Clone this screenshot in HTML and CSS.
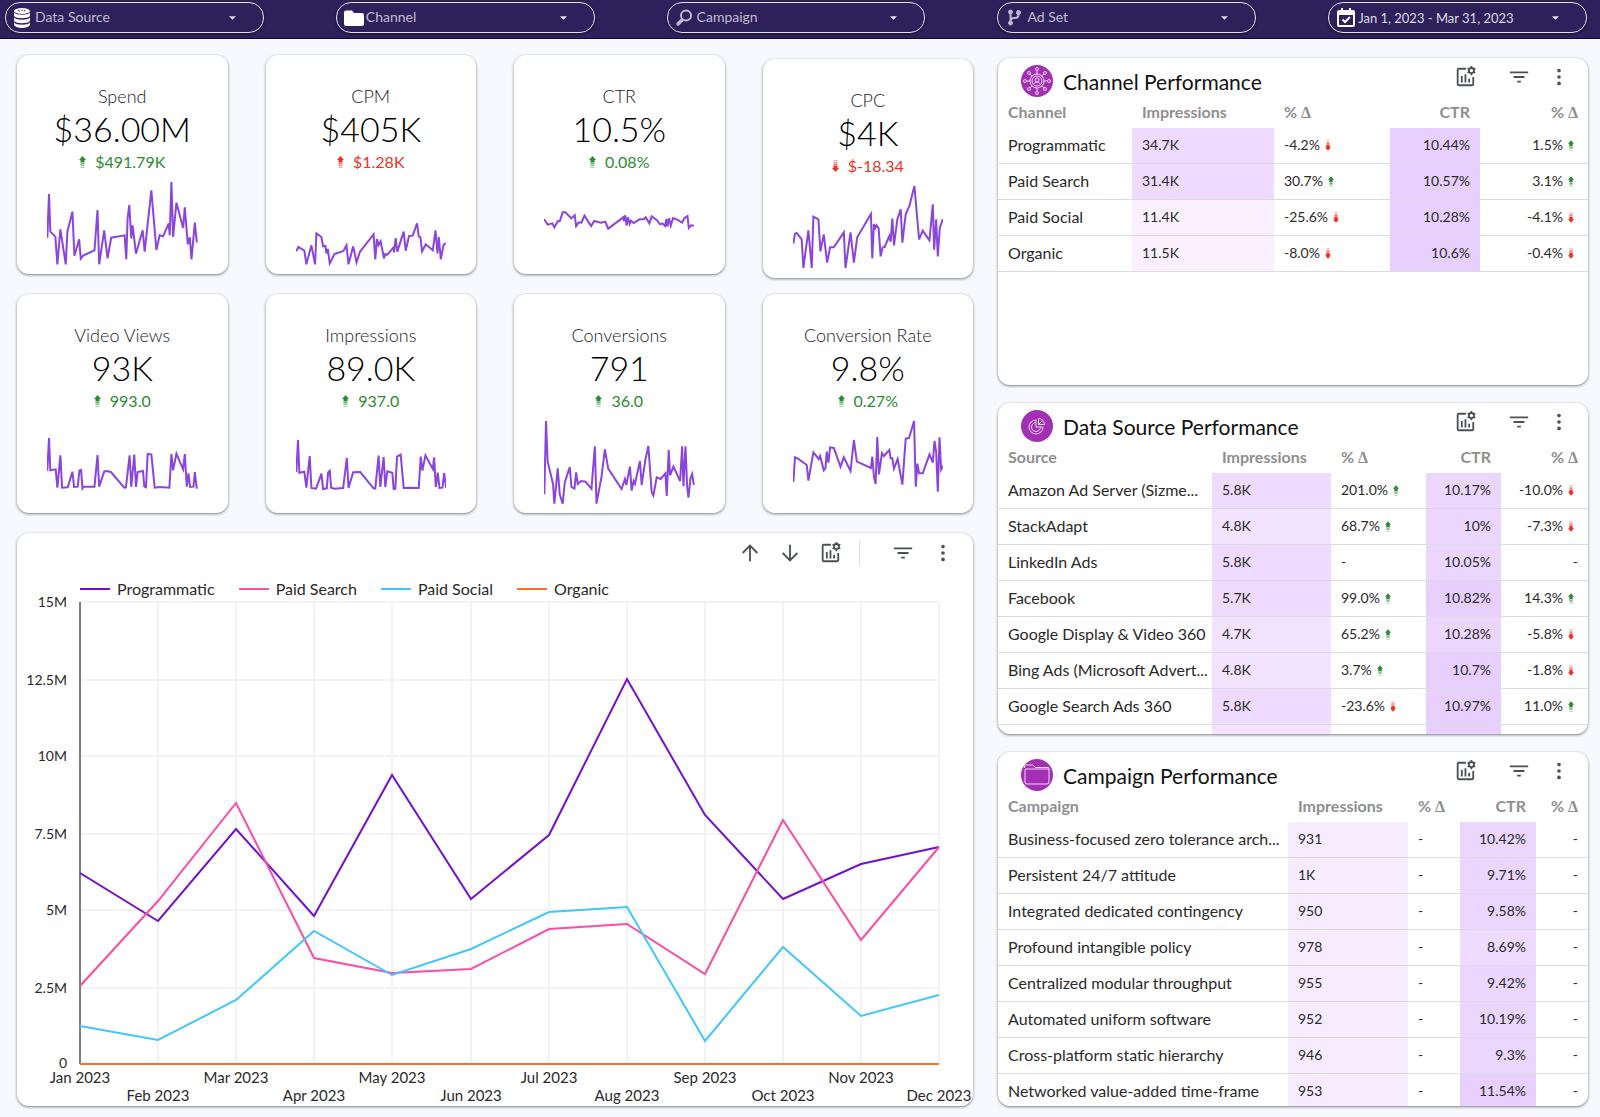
FILE: index.html
```html
<!DOCTYPE html>
<html lang="en">
<head>
    <meta charset="UTF-8">
    <meta name="viewport" content="width=device-width, initial-scale=1.0">
    <title>Marketing Dashboard</title>
    <link rel="stylesheet" href="styles.css">
</head>
<body>

    <!-- shared icons -->
    <svg class="sprite" aria-hidden="true">
        <symbol id="arrow-up" viewBox="0 0 7 12">
            <path d="M3.5 0L7 4H5.5V6.5H1.500V4H0z"/>
            <path d="M1.500 7.200h4v1.300h-4z" opacity=".8"/>
            <path d="M1.500 9.200h4v1h-4z" opacity=".6"/>
            <path d="M1.500 11h4v1h-4z" opacity=".4"/>
        </symbol>
        <symbol id="arrow-down" viewBox="0 0 7 12">
            <path d="M3.5 12L7 8H5.5V5.5H1.500V8H0z"/>
            <path d="M1.500 3.500h4v1.300h-4z" opacity=".8"/>
            <path d="M1.500 1.800h4v1h-4z" opacity=".6"/>
            <path d="M1.500 0h4v1h-4z" opacity=".4"/>
        </symbol>
        <symbol id="caret" viewBox="0 0 8 4"><path d="M0 0h8L4 4z"/></symbol>
        <symbol id="chart-settings" viewBox="0 0 24 24">
            <g fill="none" stroke="currentColor" stroke-width="2">
                <path d="M13 3H5a1 1 0 0 0-1 1v16a1 1 0 0 0 1 1h15a1 1 0 0 0 1-1v-8"/>
                <path d="M8.500 18v-7M12.500 18V9M16.500 18v-4"/>
                <circle cx="19" cy="5" r="2.800"/>
            </g>
            <path d="M18.200 0h1.600l.4 2h-2.400zM18.200 10h1.600l.4-2h-2.400zM14.300 3.200l.9-1.400 1.800 1-.9 1.600zM14.300 6.800l.9 1.400 1.800-1-.9-1.600zM23.700 3.200l-.9-1.400-1.800 1 .9 1.600zM23.700 6.800l-.9 1.400-1.800-1 .9-1.600z"/>
        </symbol>
        <symbol id="filter" viewBox="0 0 24 24"><path d="M2 6h20v2H2zM6 11h12v2H6zM10 16h4v2h-4z"/></symbol>
        <symbol id="more" viewBox="0 0 24 24"><circle cx="12" cy="5" r="2"/><circle cx="12" cy="12" r="2"/><circle cx="12" cy="19" r="2"/></symbol>
        <symbol id="sort-up" viewBox="0 0 24 24"><path d="M12 21V4M4 12l8-8 8 8" fill="none" stroke="currentColor" stroke-width="2"/></symbol>
        <symbol id="sort-down" viewBox="0 0 24 24"><path d="M12 3v17M4 12l8 8 8-8" fill="none" stroke="currentColor" stroke-width="2"/></symbol>
    </svg>

    <header class="topbar">
        <div class="filter">
            <svg class="filter-icon" viewBox="0 0 20 20" aria-hidden="true">
                <ellipse cx="9" cy="3" rx="8" ry="3"/>
                <path d="M1 4.500c2 3 14 3 16 0V8c-2 3-14 3-16 0zM1 9.500c2 3 14 3 16 0V13c-2 3-14 3-16 0zM1 14.500c2 3 14 3 16 0V17c-2 4-14 4-16 0z"/>
                <path d="M5 2l2 1.500M9 1.500v1.500M12 2l-1 1.500" stroke="#2c215a" fill="none"/>
            </svg>
            <select aria-label="Data Source"><option>Data Source</option></select>
            <svg class="caret" aria-hidden="true"><use href="#caret"/></svg>
        </div>
        <div class="filter">
            <svg class="filter-icon" viewBox="0 0 20 20" aria-hidden="true"><path d="M2 2.500h6l2 2.500h8q2 0 2 2v9q0 2-2 2H2q-2 0-2-2V4.500q0-2 2-2z"/></svg>
            <select aria-label="Channel"><option>Channel</option></select>
            <svg class="caret" aria-hidden="true"><use href="#caret"/></svg>
        </div>
        <div class="filter">
            <svg class="filter-icon soft" viewBox="0 0 20 20" aria-hidden="true">
                <circle cx="11" cy="7.500" r="5" fill="none" stroke-width="2"/>
                <path d="M7 12l-4 4" stroke-width="3.500" stroke-linecap="round"/>
            </svg>
            <select aria-label="Campaign"><option>Campaign</option></select>
            <svg class="caret" aria-hidden="true"><use href="#caret"/></svg>
        </div>
        <div class="filter">
            <svg class="filter-icon soft" viewBox="0 0 20 20" aria-hidden="true">
                <path d="M5.500 5v10M13.500 5v2q0 3-4 3t-4 3" fill="none" stroke-width="2"/>
                <circle cx="5.500" cy="4" r="2"/><circle cx="13.500" cy="4.500" r="2"/><circle cx="5.500" cy="15" r="2"/>
            </svg>
            <select aria-label="Ad Set"><option>Ad Set</option></select>
            <svg class="caret" aria-hidden="true"><use href="#caret"/></svg>
        </div>
        <button type="button" class="filter date" aria-haspopup="dialog">
            <svg class="filter-icon" viewBox="0 0 20 20" aria-hidden="true">
                <path d="M3 2h2V0h2v2h6V0h2v2h2q2 0 2 2v13q0 2-2 2H3q-2 0-2-2V4q0-2 2-2zM3 7v10h14V7z" fill-rule="evenodd"/>
                <path d="M6.500 11.500l2.500 2.500 5-5" fill="none" stroke="#fff" stroke-width="2"/>
            </svg>
            <span class="date-text">Jan 1, 2023 - Mar 31, 2023</span>
            <svg class="caret" aria-hidden="true"><use href="#caret"/></svg>
        </button>
    </header>

    <main class="dashboard">
        <div class="left">
            <section class="kpis">
                <article class="card kpi">
                    <h2>Spend</h2>
                    <p class="value">$36.00M</p>
                    <p class="delta good"><svg class="arrow"><use href="#arrow-up"/></svg>$491.79K</p>
                    <svg class="spark" viewBox="142 408 450 255" preserveAspectRatio="none"><polyline points="143,578 148,447 152,560 167,575 173,658 182,553 198,658 203,560 218,500 224,632 238,583 243,641 250,632 284,616 293,495 298,658 313,556 323,640 334,578 374,571 379,643 383,520 388,480 394,580 398,541 408,626 428,556 434,620 454,436 469,615 479,570 489,574 506,535 509,571 514,411 519,576 529,473 549,549 554,487 563,598 569,577 574,643 584,533 590,592"/></svg>
                </article>
                <article class="card kpi">
                    <h2>CPM</h2>
                    <p class="value">$405K</p>
                    <p class="delta bad"><svg class="arrow"><use href="#arrow-up"/></svg>$1.28K</p>
                    <svg class="spark" viewBox="897 408 450 255" preserveAspectRatio="none"><polyline points="898,619 904,606 922,617 928,658 943,601 954,658 958,565 973,576 978,604 985,603 988,625 992,612 998,655 1012,627 1039,618 1048,601 1054,658 1068,604 1078,652 1088,621 1129,568 1134,643 1139,582 1144,600 1150,589 1160,640 1164,627 1170,629 1189,607 1190,622 1195,579 1200,620 1219,560 1225,617 1235,573 1246,572 1259,535 1264,574 1269,577 1274,619 1285,598 1306,616 1314,556 1320,625 1324,576 1330,643 1338,600 1345,594"/></svg>
                </article>
                <article class="card kpi">
                    <h2>CTR</h2>
                    <p class="value">10.5%</p>
                    <p class="delta good"><svg class="arrow"><use href="#arrow-up"/></svg>0.08%</p>
                    <svg class="spark" viewBox="166 408 450 255" preserveAspectRatio="none"><polyline points="166,522 177,539 191,535 197,547 207,529 213,529 222,502 230,502 248,520 258,511 262,543 270,532 278,533 287,512 307,543 316,528 336,533 349,530 358,551 403,517 405,528 409,511 413,542 417,517 422,537 426,527 434,534 452,523 465,523 470,517 481,535 488,514 503,525 513,538 520,535 528,543 532,522 535,545 540,520 545,542 552,519 563,523 579,533 585,520 595,513 599,549 606,541 614,542"/></svg>
                </article>
                <article class="card kpi low">
                    <h2>CPC</h2>
                    <p class="value">$4K</p>
                    <p class="delta bad"><svg class="arrow"><use href="#arrow-down"/></svg>$-18.34</p>
                    <svg class="spark" viewBox="910 420 450 255" preserveAspectRatio="none"><polyline points="911,596 916,566 921,564 936,583 941,669 956,556 966,669 971,515 986,523 992,619 1002,568 1012,653 1021,607 1032,607 1062,562 1067,669 1082,562 1092,653 1102,577 1143,507 1147,640 1152,537 1156,549 1160,541 1166,550 1172,634 1178,607 1184,606 1198,573 1202,590 1207,521 1212,601 1222,523 1232,493 1237,593 1247,508 1258,483 1273,423 1287,583 1298,557 1318,586 1328,478 1332,614 1338,523 1343,634 1349,548 1358,522"/></svg>
                </article>
                <article class="card kpi">
                    <h2>Video Views</h2>
                    <p class="value">93K</p>
                    <p class="delta good"><svg class="arrow"><use href="#arrow-up"/></svg>993.0</p>
                    <svg class="spark" viewBox="142 405 450 255" preserveAspectRatio="none"><polyline points="143,557 148,459 152,556 168,553 173,608 182,511 187,608 204,607 218,560 223,606 234,605 239,556 244,555 248,610 251,605 284,605 293,510 298,605 313,560 320,558 333,561 373,608 378,607 389,511 394,605 403,509 408,606 413,561 429,558 433,605 438,607 443,507 454,508 464,608 480,606 508,608 514,507 519,556 529,506 549,553 554,507 560,605 565,565 570,606 580,605 584,561 590,611"/></svg>
                </article>
                <article class="card kpi">
                    <h2>Impressions</h2>
                    <p class="value">89.0K</p>
                    <p class="delta good"><svg class="arrow"><use href="#arrow-up"/></svg>937.0</p>
                    <svg class="spark" viewBox="897 405 450 255" preserveAspectRatio="none"><polyline points="898,561 903,465 907,563 922,560 928,608 938,513 943,609 957,611 973,566 978,612 989,610 993,562 998,557 1002,608 1012,611 1038,609 1049,519 1054,609 1068,562 1089,561 1129,610 1134,611 1144,512 1149,606 1159,516 1164,606 1170,559 1185,563 1189,612 1194,611 1199,515 1210,509 1219,609 1240,608 1264,609 1270,515 1275,557 1284,511 1306,552 1310,517 1315,606 1321,563 1326,609 1335,608 1340,564 1346,609"/></svg>
                </article>
                <article class="card kpi">
                    <h2>Conversions</h2>
                    <p class="value">791</p>
                    <p class="delta good"><svg class="arrow"><use href="#arrow-up"/></svg>36.0</p>
                    <svg class="spark" viewBox="166 405 450 255" preserveAspectRatio="none"><polyline points="167,628 172,408 177,530 193,597 197,656 207,550 213,628 222,656 228,593 243,546 248,606 257,611 262,562 267,597 277,588 290,590 308,611 318,484 323,656 338,575 348,493 358,551 398,612 408,582 412,600 423,545 428,617 434,588 438,596 453,528 458,600 469,525 478,483 488,622 493,632 503,577 515,582 529,565 533,633 539,495 543,571 553,545 573,588 579,484 583,604 589,484 594,605 598,638 604,580 609,567 614,600"/></svg>
                </article>
                <article class="card kpi">
                    <h2>Conversion Rate</h2>
                    <p class="value">9.8%</p>
                    <p class="delta good"><svg class="arrow"><use href="#arrow-up"/></svg>0.27%</p>
                    <svg class="spark" viewBox="910 405 450 255" preserveAspectRatio="none"><polyline points="911,591 916,517 925,521 951,540 956,587 971,502 987,522 991,513 1002,556 1007,550 1011,500 1016,533 1021,487 1032,489 1052,545 1062,517 1082,558 1092,465 1101,530 1143,549 1147,515 1152,575 1157,597 1162,456 1167,568 1176,504 1182,513 1198,495 1202,520 1207,520 1212,551 1223,522 1237,599 1247,461 1257,459 1272,408 1277,605 1282,536 1287,565 1298,565 1318,508 1328,533 1333,468 1338,500 1343,620 1348,457 1353,553 1358,543"/></svg>
                </article>
            </section>

            <section class="card trend">
                <div class="tools trend-tools">
                    <button type="button" aria-label="Sort ascending"><svg><use href="#sort-up"/></svg></button>
                    <button type="button" aria-label="Sort descending"><svg><use href="#sort-down"/></svg></button>
                    <button type="button" aria-label="Chart settings"><svg><use href="#chart-settings"/></svg></button>
                    <span class="divider"></span>
                    <button type="button" aria-label="Filter"><svg><use href="#filter"/></svg></button>
                    <button type="button" aria-label="More options"><svg><use href="#more"/></svg></button>
                </div>
                <ul class="legend">
                    <li class="programmatic">Programmatic</li>
                    <li class="search">Paid Search</li>
                    <li class="social">Paid Social</li>
                    <li class="organic">Organic</li>
                </ul>
                <svg class="plot" viewBox="0 0 956 508">
                    <path class="grid" d="M63 4H922M63 82H922M63 158H922M63 236H922M63 312H922M63 390H922M141 4V466M219 4V466M297 4V466M375 4V466M454 4V466M532 4V466M610 4V466M688 4V466M766 4V466M844 4V466M922 4V466"/>
                    <path class="axis" d="M63 4V466H922"/>
                    <polyline class="line programmatic" points="63,275 141,323 219,231 297,318 375,177 454,301 532,237 610,81 688,217 766,301 844,266 922,249"/>
                    <polyline class="line search" points="63,388 141,303 219,205 297,360 375,375 454,371 532,331 610,326 688,376 766,222 844,342 922,249"/>
                    <polyline class="line social" points="63,428 141,442 219,402 297,333 375,377 454,351 532,314 610,309 688,443 766,349 844,418 922,397"/>
                    <polyline class="line organic" points="63,466 922,466"/>
                    <g class="ylabels">
                        <text x="50" y="9">15M</text>
                        <text x="50" y="87">12.5M</text>
                        <text x="50" y="163">10M</text>
                        <text x="50" y="241">7.5M</text>
                        <text x="50" y="317">5M</text>
                        <text x="50" y="395">2.5M</text>
                        <text x="50" y="470">0</text>
                    </g>
                    <g class="xlabels">
                        <text x="63" y="485">Jan 2023</text>
                        <text x="141" y="503">Feb 2023</text>
                        <text x="219" y="485">Mar 2023</text>
                        <text x="297" y="503">Apr 2023</text>
                        <text x="375" y="485">May 2023</text>
                        <text x="454" y="503">Jun 2023</text>
                        <text x="532" y="485">Jul 2023</text>
                        <text x="610" y="503">Aug 2023</text>
                        <text x="688" y="485">Sep 2023</text>
                        <text x="766" y="503">Oct 2023</text>
                        <text x="844" y="485">Nov 2023</text>
                        <text x="922" y="503">Dec 2023</text>
                    </g>
                </svg>
            </section>
        </div>

        <div class="right">
            <section class="card panel channel">
                <div class="panel-head">
                    <svg class="badge" viewBox="0 0 32 32" aria-hidden="true">
                        <circle class="disc" cx="16" cy="16" r="16"/>
                        <circle cx="16" cy="16" r="7"/><circle cx="16" cy="16" r="5"/>
                        <circle cx="16" cy="15" r="2"/><path d="M12.500 19q3.500-4 7 0"/>
                        <path d="M16 9V6M16 23v3M9 16H6M23 16h3M11 11L9 9M21 11l2-2M11 21l-2 2M21 21l2 2"/>
                        <circle cx="16" cy="4" r="1.500"/><circle cx="16" cy="28" r="1.500"/><circle cx="4" cy="16" r="1.500"/><circle cx="28" cy="16" r="1.500"/>
                        <circle cx="8" cy="8" r="1.500"/><circle cx="24" cy="8" r="1.500"/><circle cx="8" cy="24" r="1.500"/><circle cx="24" cy="24" r="1.500"/>
                    </svg>
                    <h2>Channel Performance</h2>
                    <div class="tools">
                        <button type="button" aria-label="Chart settings"><svg><use href="#chart-settings"/></svg></button>
                        <button type="button" aria-label="Filter"><svg><use href="#filter"/></svg></button>
                        <button type="button" aria-label="More options"><svg><use href="#more"/></svg></button>
                    </div>
                </div>
                <table>
                    <colgroup><col class="c-name"><col class="c-imp"><col class="c-d1"><col class="c-ctr"><col class="c-d2"></colgroup>
                    <thead>
                        <tr><th>Channel</th><th>Impressions</th><th>% <span class="tri">Δ</span></th><th>CTR</th><th>% <span class="tri">Δ</span></th></tr>
                    </thead>
                    <tbody>
                        <tr><td>Programmatic</td><td class="h3">34.7K</td><td>-4.2%<svg class="arrow bad"><use href="#arrow-down"/></svg></td><td class="h5">10.44%</td><td>1.5%<svg class="arrow good"><use href="#arrow-up"/></svg></td></tr>
                        <tr><td>Paid Search</td><td class="h3">31.4K</td><td>30.7%<svg class="arrow good"><use href="#arrow-up"/></svg></td><td class="h5">10.57%</td><td>3.1%<svg class="arrow good"><use href="#arrow-up"/></svg></td></tr>
                        <tr><td>Paid Social</td><td class="h0">11.4K</td><td>-25.6%<svg class="arrow bad"><use href="#arrow-down"/></svg></td><td class="h5">10.28%</td><td>-4.1%<svg class="arrow bad"><use href="#arrow-down"/></svg></td></tr>
                        <tr><td>Organic</td><td class="h0">11.5K</td><td>-8.0%<svg class="arrow bad"><use href="#arrow-down"/></svg></td><td class="h5">10.6%</td><td>-0.4%<svg class="arrow bad"><use href="#arrow-down"/></svg></td></tr>
                    </tbody>
                </table>
            </section>

            <section class="card panel source">
                <div class="panel-head">
                    <svg class="badge" viewBox="0 0 32 32" aria-hidden="true">
                        <circle class="disc" cx="16" cy="16" r="16"/>
                        <path d="M15 10a7 7 0 1 0 7 7h-7z"/><path d="M17.500 8.500v6h6a6 6 0 0 0-6-6z"/><path d="M15 12.500a4.500 4.500 0 1 0 4.500 4.500M18 14l3-3"/>
                    </svg>
                    <h2>Data Source Performance</h2>
                    <div class="tools">
                        <button type="button" aria-label="Chart settings"><svg><use href="#chart-settings"/></svg></button>
                        <button type="button" aria-label="Filter"><svg><use href="#filter"/></svg></button>
                        <button type="button" aria-label="More options"><svg><use href="#more"/></svg></button>
                    </div>
                </div>
                <table>
                    <colgroup><col class="c-name"><col class="c-imp"><col class="c-d1"><col class="c-ctr"><col class="c-d2"></colgroup>
                    <thead>
                        <tr><th>Source</th><th>Impressions</th><th>% <span class="tri">Δ</span></th><th>CTR</th><th>% <span class="tri">Δ</span></th></tr>
                    </thead>
                    <tbody>
                        <tr><td>Amazon Ad Server (Sizme...</td><td class="h3">5.8K</td><td>201.0%<svg class="arrow good"><use href="#arrow-up"/></svg></td><td class="h4">10.17%</td><td>-10.0%<svg class="arrow bad"><use href="#arrow-down"/></svg></td></tr>
                        <tr><td>StackAdapt</td><td class="h2">4.8K</td><td>68.7%<svg class="arrow good"><use href="#arrow-up"/></svg></td><td class="h4">10%</td><td>-7.3%<svg class="arrow bad"><use href="#arrow-down"/></svg></td></tr>
                        <tr><td>LinkedIn Ads</td><td class="h3">5.8K</td><td>-</td><td class="h4">10.05%</td><td>-</td></tr>
                        <tr><td>Facebook</td><td class="h3">5.7K</td><td>99.0%<svg class="arrow good"><use href="#arrow-up"/></svg></td><td class="h5">10.82%</td><td>14.3%<svg class="arrow good"><use href="#arrow-up"/></svg></td></tr>
                        <tr><td>Google Display &amp; Video 360</td><td class="h2">4.7K</td><td>65.2%<svg class="arrow good"><use href="#arrow-up"/></svg></td><td class="h4">10.28%</td><td>-5.8%<svg class="arrow bad"><use href="#arrow-down"/></svg></td></tr>
                        <tr><td>Bing Ads (Microsoft Advert...</td><td class="h2">4.8K</td><td>3.7%<svg class="arrow good"><use href="#arrow-up"/></svg></td><td class="h5">10.7%</td><td>-1.8%<svg class="arrow bad"><use href="#arrow-down"/></svg></td></tr>
                        <tr><td>Google Search Ads 360</td><td class="h3">5.8K</td><td>-23.6%<svg class="arrow bad"><use href="#arrow-down"/></svg></td><td class="h5">10.97%</td><td>11.0%<svg class="arrow good"><use href="#arrow-up"/></svg></td></tr>
                        <tr><td></td><td class="h2"></td><td></td><td class="h5"></td><td></td></tr>
                    </tbody>
                </table>
            </section>

            <section class="card panel campaign">
                <div class="panel-head">
                    <svg class="badge" viewBox="0 0 32 32" aria-hidden="true">
                        <circle class="disc" cx="16" cy="16" r="16"/>
                        <path d="M3.500 9V7q0-1 1-1h7l3 2.500h12.500q1 0 1 1V23q0 2-2 2H6q-2 0-2-2V11q0-1 1-1h22q1 0 1 1"/>
                    </svg>
                    <h2>Campaign Performance</h2>
                    <div class="tools">
                        <button type="button" aria-label="Chart settings"><svg><use href="#chart-settings"/></svg></button>
                        <button type="button" aria-label="Filter"><svg><use href="#filter"/></svg></button>
                        <button type="button" aria-label="More options"><svg><use href="#more"/></svg></button>
                    </div>
                </div>
                <table>
                    <colgroup><col class="c-name"><col class="c-imp"><col class="c-d1"><col class="c-ctr"><col class="c-d2"></colgroup>
                    <thead>
                        <tr><th>Campaign</th><th>Impressions</th><th>% <span class="tri">Δ</span></th><th>CTR</th><th>% <span class="tri">Δ</span></th></tr>
                    </thead>
                    <tbody>
                        <tr><td>Business-focused zero tolerance arch...</td><td class="h1">931</td><td>-</td><td class="h4">10.42%</td><td>-</td></tr>
                        <tr><td>Persistent 24/7 attitude</td><td class="h1">1K</td><td>-</td><td class="h4">9.71%</td><td>-</td></tr>
                        <tr><td>Integrated dedicated contingency</td><td class="h1">950</td><td>-</td><td class="h4">9.58%</td><td>-</td></tr>
                        <tr><td>Profound intangible policy</td><td class="h1">978</td><td>-</td><td class="h3">8.69%</td><td>-</td></tr>
                        <tr><td>Centralized modular throughput</td><td class="h1">955</td><td>-</td><td class="h4">9.42%</td><td>-</td></tr>
                        <tr><td>Automated uniform software</td><td class="h1">952</td><td>-</td><td class="h4">10.19%</td><td>-</td></tr>
                        <tr><td>Cross-platform static hierarchy</td><td class="h1">946</td><td>-</td><td class="h4">9.3%</td><td>-</td></tr>
                        <tr><td>Networked value-added time-frame</td><td class="h1">953</td><td>-</td><td class="h5">11.54%</td><td>-</td></tr>
                    </tbody>
                </table>
            </section>
        </div>
    </main>

</body>
</html>
```

FILE: styles.css
```css
* {
    box-sizing: border-box;
}

body {
    margin: 0;
    min-height: 100vh;
    background-color: #f8f9ff;
    font-family: 'Lato', sans-serif;
    font-size: 15px;
    color: #2a2a2a;
}

h2,
p,
ul {
    margin: 0;
    padding: 0;
    font-weight: 400;
}

.sprite {
    display: none;
}

svg {
    fill: currentColor;
}

.good {
    color: #2a8c30;
}

.bad {
    color: #ee3124;
}

/* top filters */
.topbar {
    display: grid;
    grid-template-columns: repeat(5, minmax(0, 1fr));
    gap: 72px;
    padding: 2px 13px 5px 5px;
    background-color: #2c215a;
    border-bottom: 1px solid #10004a;
}

.filter {
    display: flex;
    align-items: center;
    gap: 2px;
    height: 31px;
    padding: 0 27px 0 7px;
    border: 1px solid #e4e2ec;
    border-radius: 15px;
    background: none;
    box-shadow: 0 1px 3px rgba(0, 0, 0, 0.5);
    color: #c0bcd0;
    font-family: inherit;
    font-size: 14px;
    text-align: left;
}

.filter select {
    flex: 1;
    min-width: 0;
    height: 100%;
    padding: 0 0 2px;
    appearance: none;
    border: none;
    background: none;
    color: inherit;
    font: inherit;
    cursor: pointer;
}

.filter-icon {
    flex: none;
    width: 20px;
    height: 20px;
    color: #ffffff;
}

.filter-icon.soft {
    color: #bdb9ce;
    stroke: currentColor;
}

.date {
    color: #dddbe6;
    font-size: 13px;
    cursor: pointer;
}

.date-text {
    flex: 1;
    white-space: nowrap;
}

.caret {
    flex: none;
    width: 7px;
    height: 4px;
    color: #e4e2ec;
}

/* layout */
.dashboard {
    display: grid;
    grid-template-columns: minmax(0, 956fr) minmax(0, 590fr);
    gap: 25px;
    padding: 16px 12px 11px 17px;
}

.left {
    display: flex;
    flex-direction: column;
    gap: 20px;
}

.right {
    display: flex;
    flex-direction: column;
    gap: 18px;
    padding-top: 3px;
}

.card {
    background-color: #ffffff;
    border-radius: 12px;
    box-shadow: 0 1px 3px rgba(0, 0, 0, 0.5);
}

/* kpi cards */
.kpis {
    display: grid;
    grid-template-columns: repeat(4, minmax(0, 1fr));
    grid-template-rows: 223px auto;
    align-items: start;
    gap: 16px 38px;
}

.kpi {
    padding: 29px 30px 8px;
    text-align: center;
}

.kpi.low {
    align-self: end;
}

.kpi h2 {
    font-size: 18px;
    font-weight: 300;
    line-height: 24px;
    color: #202124;
    white-space: nowrap;
}

.value {
    font-size: 34px;
    font-weight: 300;
    line-height: 42px;
    color: #000000;
}

.delta {
    display: flex;
    justify-content: center;
    align-items: center;
    gap: 9px;
    font-size: 16px;
    line-height: 24px;
}

.arrow {
    width: 7px;
    height: 12px;
}

.spark {
    display: block;
    width: 100%;
    height: 85px;
    margin-top: 7px;
}

.spark polyline {
    fill: none;
    stroke: #8a45dc;
    stroke-width: 2;
    vector-effect: non-scaling-stroke;
}

/* toolbar buttons */
.tools {
    display: flex;
    align-items: center;
    color: #4d5156;
}

.tools button {
    display: flex;
    padding: 0;
    border: none;
    background: none;
    color: inherit;
    cursor: pointer;
}

.tools svg {
    width: 22px;
    height: 22px;
}

/* line chart */
.trend-tools {
    justify-content: flex-end;
    gap: 18px;
    padding: 8px 19px 0 0;
}

.divider {
    width: 1px;
    height: 24px;
    background-color: #dadce0;
}

.divider + button {
    margin-left: 14px;
}

.legend {
    display: flex;
    gap: 24px;
    padding: 15px 0 0 63px;
    list-style: none;
    font-size: 16px;
    line-height: 18px;
}

.legend li {
    display: flex;
    align-items: center;
    gap: 7px;
}

.legend li::before {
    content: "";
    width: 30px;
    height: 2px;
    background-color: var(--series);
}

.programmatic {
    --series: #7210d2;
}

.search {
    --series: #fb4ca6;
}

.social {
    --series: #42c6ff;
}

.legend .organic,
.line.organic {
    --series: #ff6f1e;
}

.plot {
    display: block;
    width: 100%;
    overflow: visible;
}

.grid {
    fill: none;
    stroke: #f0f0f0;
    stroke-width: 1.5;
}

.axis {
    fill: none;
    stroke: #000000;
}

.line {
    fill: none;
    stroke: var(--series);
    stroke-width: 2;
}

.ylabels {
    font-size: 14px;
    text-anchor: end;
}

.xlabels {
    text-anchor: middle;
}

/* table panels */
.panel {
    overflow: hidden;
}

.channel {
    height: 327px;
}

.source {
    height: 331px;
}

.campaign {
    height: 354px;
}

.panel-head {
    display: flex;
    align-items: center;
    height: 40px;
    padding: 6px 18px 0 23px;
}

.badge {
    width: 32px;
    height: 32px;
    margin-right: 10px;
    fill: none;
    stroke: #f0d8f4;
}

.disc {
    fill: #a32fb4;
    stroke: none;
}

.panel-head h2 {
    flex: 1;
    font-size: 21px;
    color: #111111;
}

.panel .tools {
    align-self: flex-start;
    gap: 18px;
    padding-top: 2px;
}

.panel .tools button:first-child {
    margin-right: 14px;
}

table {
    width: 100%;
    table-layout: fixed;
    border-collapse: separate;
    border-spacing: 0;
}

th,
td {
    padding: 0 10px 2px;
    overflow: hidden;
    text-align: left;
    white-space: nowrap;
}

th {
    height: 30px;
    color: #8f8f8f;
    font-size: 16px;
    line-height: 18px;
    font-weight: 700;
}

td {
    height: 36px;
    border-bottom: 1px solid #dcdcdc;
    font-size: 14px;
}

td:first-child {
    font-size: 16px;
}

th:nth-child(n + 4),
td:nth-child(n + 4) {
    text-align: right;
}

td .arrow {
    width: 6px;
    height: 11px;
    margin: 0 4px 0 5px;
    vertical-align: -1px;
}

.tri {
    font-family: 'Liberation Serif', serif;
}

.channel .c-imp { width: 142px; }
.channel .c-d1 { width: 116px; }
.channel .c-ctr { width: 90px; }
.channel .c-d2 { width: 108px; }

.source .c-imp { width: 119px; }
.source .c-d1 { width: 95px; }
.source .c-ctr { width: 75px; }
.source .c-d2 { width: 87px; }

.campaign .c-imp { width: 120px; }
.campaign .c-d1 { width: 52px; }
.campaign .c-ctr { width: 76px; }
.campaign .c-d2 { width: 52px; }

/* heatmap steps */
.h0 { background-color: #f9f1ff; }
.h1 { background-color: #f7ebff; }
.h2 { background-color: #f3e3fe; }
.h3 { background-color: #eedbff; }
.h4 { background-color: #ead6ff; }
.h5 { background-color: #e7d0ff; }
```
